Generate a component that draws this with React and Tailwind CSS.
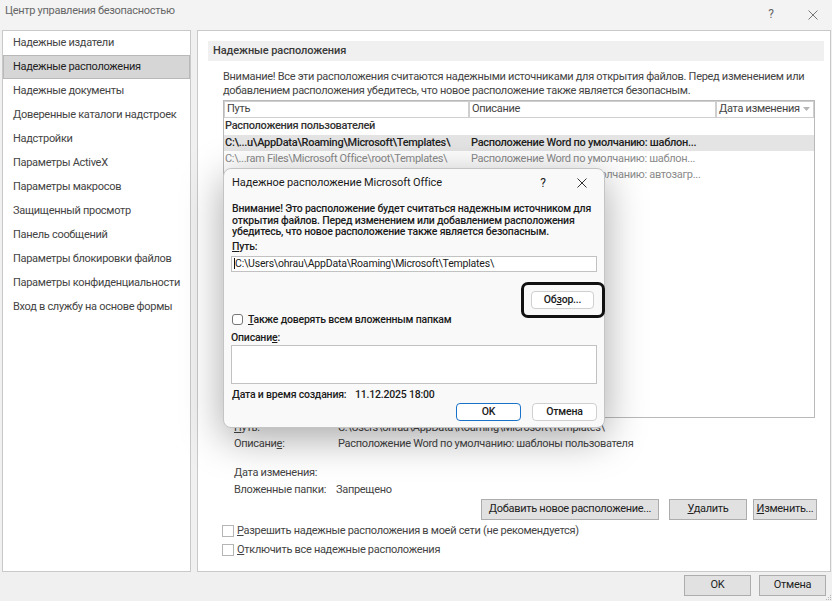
import { useState } from "react";

const sideItems = [
  "Надежные издатели",
  "Надежные расположения",
  "Надежные документы",
  "Доверенные каталоги надстроек",
  "Надстройки",
  "Параметры ActiveX",
  "Параметры макросов",
  "Защищенный просмотр",
  "Панель сообщений",
  "Параметры блокировки файлов",
  "Параметры конфиденциальности",
  "Вход в службу на основе формы",
];

const rows = [
  { path: "C:\\...u\\AppData\\Roaming\\Microsoft\\Templates\\", desc: "Расположение Word по умолчанию: шаблон...", sel: true },
  { path: "C:\\...ram Files\\Microsoft Office\\root\\Templates\\", desc: "Расположение Word по умолчанию: шаблон..." },
  { path: "C:\\...ta\\Roaming\\Microsoft\\Word\\Startup\\", desc: "Расположение Word по умолчанию: автозагр..." },
];

let CloseIcon = ({ size = 10, color = "#555" }) => (
  <svg width={size} height={size} viewBox="0 0 10 10">
    <path d="M0.5 0.5 L9.5 9.5 M9.5 0.5 L0.5 9.5" stroke={color} strokeWidth="1" fill="none" />
  </svg>
);

let Btn = ({ children, className = "" }) => (
  <div className={"h-[21px] flex items-center justify-center border border-[#adadad] bg-[#e1e1e1] text-[#222] whitespace-nowrap " + className}>
    <span>{children}</span>
  </div>
);

let App = () => {
  const [sel] = useState(1);

  return (
    <div className="w-[832px] h-[601px] bg-[#f0f0f0] relative overflow-hidden text-[11px] text-[#444] font-['Roboto',sans-serif] tracking-[-0.3px] whitespace-nowrap">
      {/* title bar */}
      <div className="h-[30px] flex items-start pt-[3px] pl-[5px] bg-[#f3f3f3]">
        <div className="text-[11px] text-[#666]">Центр управления безопасностью</div>
        <div className="ml-auto flex items-center pt-[2px]">
          <span className="text-[12px] text-[#666] w-[12px] text-center">?</span>
          <span className="ml-[31px] mr-[14px] mt-[1px]"><CloseIcon size={10} color="#777" /></span>
        </div>
      </div>

      <div className="flex h-[542px] pl-[2px] gap-[6px]">
        {/* left nav */}
        <div className="w-[189px] border border-[#c9c9c9] bg-white">
          {sideItems.map((t, i) => (
            <div
              key={t}
              className={
                "h-[24px] flex items-center pl-[9px] pt-[1px] " +
                (i === sel ? "bg-[#d6d6d6] border border-[#b9b9b9] text-[#222]" : "border border-transparent")
              }
            >
              {t}
            </div>
          ))}
        </div>

        {/* right panel */}
        <div className="w-[634px] border border-[#c9c9c9] bg-white flex flex-col">
          <div className="mt-[10px] ml-[10px] mr-[6px] h-[20px] bg-[#f0f0f0] flex items-center pl-[5px] font-medium tracking-[-0.1px] text-[#3a3a3a]">
            Надежные расположения
          </div>
          <div className="ml-[25px] mt-[9px] leading-[14px] text-[#444]">
            <div>Внимание! Все эти расположения считаются надежными источниками для открытия файлов. Перед изменением или</div>
            <div>добавлением расположения убедитесь, что новое расположение также является безопасным.</div>
          </div>

          {/* table */}
          <div className="ml-[25px] mt-[2px] w-[592px] h-[318px] border border-[#b9b9b9] bg-white">
            <div className="flex h-[17px] text-[#444]">
              <div className="w-[245px] border border-[#cfcfcf] pl-[2px] leading-[14px]">Путь</div>
              <div className="w-[247px] border border-[#cfcfcf] pl-[2px] leading-[14px]">Описание</div>
              <div className="flex-1 border border-[#cfcfcf] pl-[2px] leading-[14px] flex items-start">
                Дата изменения
                <svg className="ml-auto mr-[3px] mt-[5px]" width="7" height="4" viewBox="0 0 7 4">
                  <path d="M0 0 L7 0 L3.5 4 Z" fill="#b5b5b5" />
                </svg>
              </div>
            </div>
            <div className="h-[17px] flex items-center pl-[1px] font-medium text-[#333]">Расположения пользователей</div>
            {rows.map((r) => (
              <div key={r.path} className={"h-[16px] flex items-center " + (r.sel ? "bg-[#e4e4e4] text-[#222] font-medium" : "text-[#8a8a8a]")}>
                <div className="w-[247px] pl-[1px] overflow-hidden">{r.path}</div>
                <div>{r.desc}</div>
              </div>
            ))}
          </div>

          {/* details */}
          <div className="ml-[36px] mt-[2px] leading-[16px] text-[#444]">
            <div className="flex h-[16px]">
              <div className="w-[104px]"><span className="underline">П</span>уть:</div>
              <div>C:\Users\ohrau\AppData\Roaming\Microsoft\Templates\</div>
            </div>
            <div className="flex h-[16px]">
              <div className="w-[104px]">Описани<span className="underline">е</span>:</div>
              <div>Расположение Word по умолчанию: шаблоны пользователя</div>
            </div>
            <div className="flex h-[16px] mt-[13px]">
              <div className="w-[104px]">Дата изменения:</div>
              <div></div>
            </div>
            <div className="flex h-[16px] mt-[1px]">
              <div className="w-[102px]">Вложенные папки:</div>
              <div>Запрещено</div>
            </div>
          </div>

          <div className="flex justify-end mr-[13px] mt-[1px]">
            <Btn className="w-[178px]"><span className="underline">Д</span>обавить новое расположение...</Btn>
            <Btn className="w-[78px] ml-[10px]"><span className="underline">У</span>далить</Btn>
            <Btn className="w-[64px] ml-[6px]"><span className="underline">И</span>зменить...</Btn>
          </div>

          <div className="ml-[24px] mt-[5px] flex flex-col gap-[7px]">
            <div className="flex items-center h-[12px]">
              <div className="w-[12px] h-[12px] border border-[#b5b5b5] bg-white"></div>
              <div className="ml-[3px]"><span className="underline">Р</span>азрешить надежные расположения в моей сети (не рекомендуется)</div>
            </div>
            <div className="flex items-center h-[12px]">
              <div className="w-[12px] h-[12px] border border-[#b5b5b5] bg-white"></div>
              <div className="ml-[3px]"><span className="underline">О</span>тключить все надежные расположения</div>
            </div>
          </div>
        </div>
      </div>

      {/* bottom buttons */}
      <div className="flex justify-end gap-[8px] mr-[6px] mt-[3px]">
        <Btn className="w-[67px] h-[20px]">OK</Btn>
        <Btn className="w-[67px] h-[20px]">Отмена</Btn>
      </div>

      {/* resize grip */}
      <svg className="absolute right-[0px] bottom-[0px]" width="6" height="6" viewBox="0 0 6 6">
        <rect x="4" y="0" width="1" height="1" fill="#b5b5b5" />
        <rect x="2" y="2" width="1" height="1" fill="#b5b5b5" />
        <rect x="4" y="2" width="1" height="1" fill="#b5b5b5" />
        <rect x="0" y="4" width="1" height="1" fill="#b5b5b5" />
        <rect x="2" y="4" width="1" height="1" fill="#b5b5b5" />
        <rect x="4" y="4" width="1" height="1" fill="#b5b5b5" />
      </svg>

      {/* modal dialog */}
      <div className="absolute left-[223px] top-[168px] w-[382px] h-[260px] rounded-[8px] border border-[#c4c4c4] bg-[#f9f9f9] shadow-[0_10px_40px_rgba(0,0,0,0.35)] text-[#1b1b1b] text-[10.5px] tracking-[-0.2px] flex flex-col">
        <div className="h-[28px] flex items-center pl-[8px]">
          <span className="text-[11px] tracking-[-0.1px]">Надежное расположение Microsoft Office</span>
          <span className="ml-auto text-[12px] w-[12px] text-center">?</span>
          <span className="ml-[28px] mr-[17px]"><CloseIcon size={10} color="#333" /></span>
        </div>
        <div className="px-[7px] mt-[6px]">
          <div className="leading-[11.5px] font-medium pl-[1px]">
            <div>Внимание! Это расположение будет считаться надежным источником для</div>
            <div>открытия файлов. Перед изменением или добавлением расположения</div>
            <div>убедитесь, что новое расположение также является безопасным.</div>
          </div>
          <div className="mt-[2px] leading-[14px] font-medium pl-[1px]"><span className="underline">П</span>уть:</div>
          <div className="mt-[2px] h-[16px] bg-white border border-[#c2c2c2] flex items-center pl-[2px]">
            <span className="border-l border-[#111] leading-[11px]">C:\Users\ohrau\AppData\Roaming\Microsoft\Templates\</span>
          </div>
          <div className="flex justify-end mt-[19px] mr-[3px]">
            <div className="w-[63px] h-[18px] bg-white border border-[#d0d0d0] rounded-[4px] flex items-center justify-center font-medium">
              <span>Об<span className="underline">з</span>ор...</span>
            </div>
          </div>
          <div className="flex items-center mt-[5px] h-[12px]">
            <div className="ml-[1px] w-[11px] h-[11px] rounded-[3px] border border-[#777] bg-white"></div>
            <div className="ml-[5px] font-medium"><span className="underline">Т</span>акже доверять всем вложенным папкам</div>
          </div>
          <div className="mt-[5px] font-medium leading-[14px]">Описани<span className="underline">е</span>:</div>
          <div className="h-[39px] bg-white border border-[#c2c2c2]"></div>
          <div className="mt-[4px] flex font-medium leading-[14px]">
            <span className="w-[124px] pl-[1px]">Дата и время создания:</span>
            <span>11.12.2025 18:00</span>
          </div>
          <div className="flex justify-end gap-[11px] mt-[1px]">
            <div className="w-[65px] h-[18px] bg-white border-[1.5px] border-[#1a73c8] rounded-[4px] flex items-center justify-center font-medium">OK</div>
            <div className="w-[65px] h-[18px] bg-white border border-[#d0d0d0] rounded-[4px] flex items-center justify-center font-medium">Отмена</div>
          </div>
        </div>
      </div>

      {/* highlight annotation around browse button */}
      <div className="absolute left-[521px] top-[282px] w-[84px] h-[36px] rounded-[7px] border-[3px] border-[#111]"></div>
    </div>
  );
};

export default App;
